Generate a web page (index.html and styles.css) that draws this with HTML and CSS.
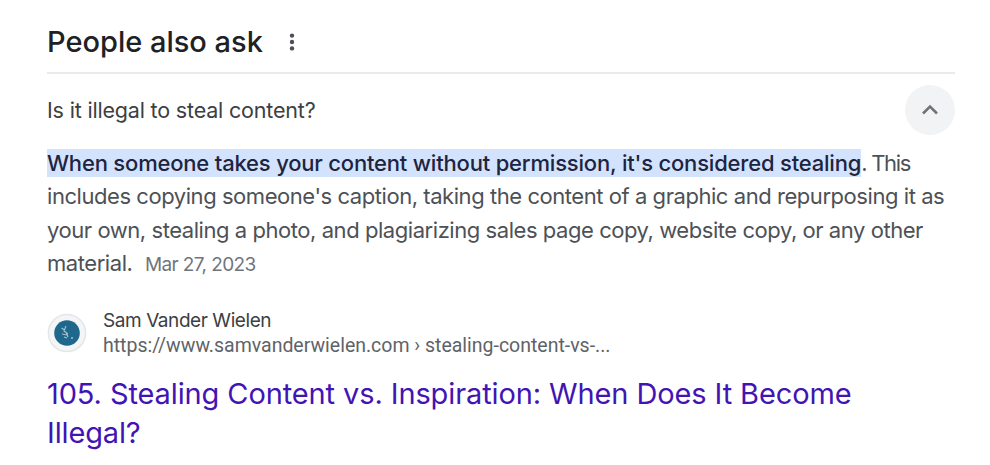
FILE: index.html
```html
<!DOCTYPE html>
<html lang="en">
<head>
<meta charset="utf-8">
<title>People also ask</title>
<link rel="stylesheet" href="styles.css">
</head>
<body>
<main class="panel">
  <header class="header">
    <h2 class="heading">People also ask</h2>
    <svg class="dots" width="8" height="20" viewBox="0 0 8 20"><circle cx="4" cy="3.6" r="2.2"/><circle cx="4" cy="10" r="2.2"/><circle cx="4" cy="16.4" r="2.2"/></svg>
  </header>
  <div class="question">
    <span class="question-text">Is it illegal to steal content?</span>
    <button class="toggle" aria-label="Collapse"><svg width="18" height="12" viewBox="0 0 18 12"><path d="M2 9.5 9 2.5l7 7"/></svg></button>
  </div>
  <p class="answer">
    <span class="line first"><mark>When someone takes your content without permission, it's considered stealing</mark><span class="tail">. This</span></span>
    <span class="line">includes copying someone's caption, taking the content of a graphic and repurposing it as</span>
    <span class="line">your own, stealing a photo, and plagiarizing sales page copy, website copy, or any other</span>
    <span class="line">material.<span class="date">Mar 27, 2023</span></span>
  </p>
  <div class="source">
    <svg class="favicon" width="40" height="40" viewBox="0 0 40 40"><circle class="ring" cx="20" cy="20" r="18.6"/><circle class="disc" cx="20" cy="20" r="12.8"/><path class="mark" d="m14.5 15 3 2m1.5-4-2 5 4 3m-6 0 5 1m-1-3 2 5m-4 0 3 1"/><circle class="speck" cx="25" cy="25" r="1"/></svg>
    <div class="site"><span class="name">Sam Vander Wielen</span><span class="url">https://www.samvanderwielen.com › stealing-content-vs-...</span></div>
  </div>
  <h3 class="title"><span class="line">105. Stealing Content vs. Inspiration: When Does It Become</span><span class="line last">Illegal?</span></h3>
</main>
</body>
</html>
```
FILE: styles.css
```css
body { margin: 0; background: #fff; font-family: Inter, "Liberation Sans", sans-serif; color: #4d5156; }
.panel { width: 908px; margin-left: 47px; padding-top: 20px; }
.header { display: flex; align-items: center; height: 44px; padding-bottom: 8px; border-bottom: 2px solid #e8eaed; white-space: nowrap; }
.heading { margin: 0; width: 241px; font-size: 29px; font-weight: 500; line-height: 44px; color: #202124; }
.dots { fill: #4d5156; }
.question { display: flex; justify-content: space-between; align-items: center; height: 72px; color: #3c4043; font-size: 21.5px; letter-spacing: -0.18px; }
.toggle { display: flex; align-items: center; justify-content: center; width: 50px; height: 50px; padding: 0; border: 0; border-radius: 50%; background: #f1f3f4; }
.toggle path { fill: none; stroke: #70757a; stroke-width: 2.6; }
.answer { margin: 1px 0 0; font-size: 22px; line-height: 33.4px; letter-spacing: -0.445px; }
.line { display: block; white-space: nowrap; }
mark { padding: 1px 0; background: #d3e3fd; color: #202340; font-weight: 500; letter-spacing: -0.19px; }
.tail { letter-spacing: -1.3px; }
.date { margin-left: 12.5px; font-size: 19px; letter-spacing: -0.6px; color: #70757a; }
.source { display: flex; align-items: flex-end; margin-top: 26px; }
.favicon { margin: 0 16px 2px 0; }
.ring { fill: #f3f5f6; stroke: #e4e6e9; stroke-width: 1.5; }
.disc { fill: #20688b; }
.mark { fill: none; stroke: #9fbfd2; stroke-width: 1.2; }
.speck { fill: #9fbfd2; }
.site { display: flex; flex-direction: column; align-items: flex-start; height: 47px; line-height: 25px; white-space: nowrap; }
.name { font-size: 19px; letter-spacing: -0.43px; color: #3c4043; }
.url { font-family: Roboto, sans-serif; font-size: 19.5px; letter-spacing: -0.01px; color: #5f6368; }
.title { margin: 19.5px 0 0; font-size: 29px; font-weight: 400; line-height: 39px; letter-spacing: -0.11px; color: #4214b4; }
.last { letter-spacing: -0.15px; }
```
